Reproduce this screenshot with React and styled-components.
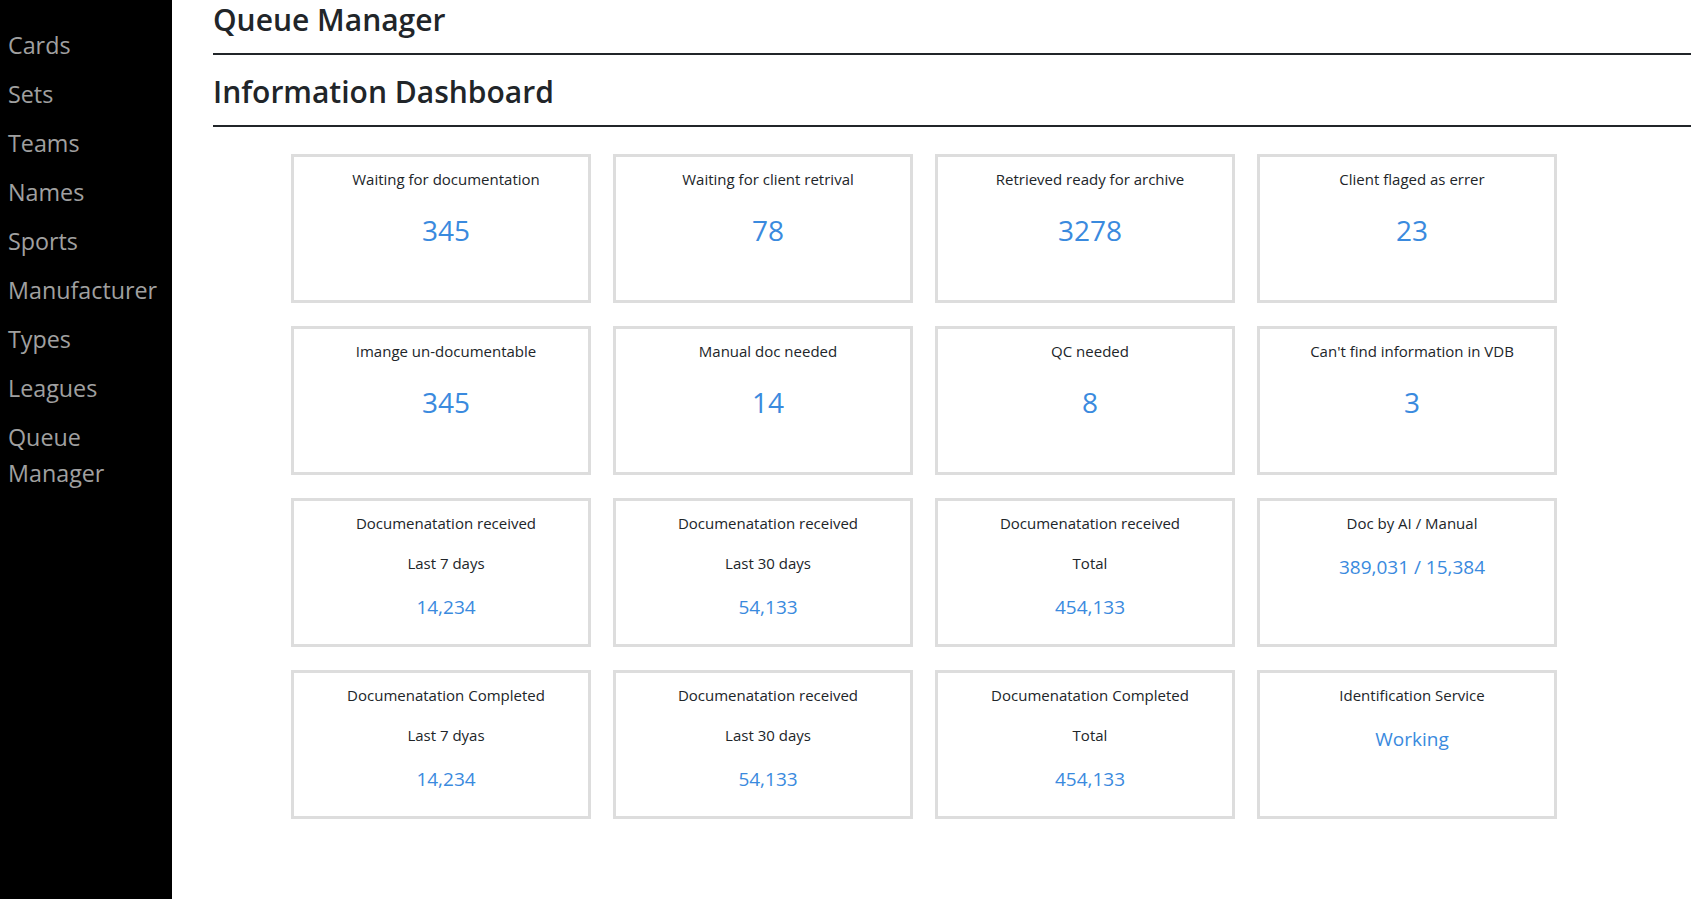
import React from 'react'
import styled, {createGlobalStyle} from 'styled-components'

const GlobalStyle = createGlobalStyle`
html, body{
  margin:0;
  padding:0;
  background:#fff;
}
body{
  font-family:"Open Sans","Noto Sans",sans-serif;
  color:#212529;
}
*{
  box-sizing:border-box;
}
`

const Layout = styled.div`
display:flex;
min-height:100vh;
`
const Sidebar = styled.nav`
flex:0 0 172px;
width:172px;
background:#000;
padding:21px 6px 0 8px;
`
const NavItem = styled.a`
display:block;
padding:6px 0 7px;
font-size:23.3px;
line-height:36px;
color:#a0a0a0;
text-decoration:none;
`
const Main = styled.main`
flex:1;
padding-left:41px;
overflow:hidden;
`
const Heading = styled.h2`
margin:${p => p.first ? '0' : '18px 0 0'};
padding-top:${p => p.first ? '1px' : '0'};
font-size:30px;
font-weight:600;
line-height:38px;
color:#212529;
`
const Rule = styled.hr`
margin:14px 0 0;
border:0;
border-top:2px solid #212529;
opacity:1;
`
const Grid = styled.div`
display:grid;
grid-template-columns:repeat(4,300px);
column-gap:22px;
row-gap:23px;
margin:27px 0 0 78px;
`
const Card = styled.div`
height:149px;
border:3px solid #dddddd;
padding:11px 0 0 10px;
display:flex;
flex-direction:column;
align-items:center;
text-align:center;
`
const Label = styled.div`
font-size:15px;
line-height:22px;
margin-bottom:18px;
color:#212529;
`
const Value = styled.div`
color:#3a8ade;
font-size:${p => p.big ? '28px' : '19px'};
line-height:${p => p.big ? '34px' : '24px'};
margin-top:${p => p.big ? '5px' : '3px'};
`

const navItems = ['Cards','Sets','Teams','Names','Sports','Manufacturer','Types','Leagues','Queue Manager']

const cards = [
  {title:'Waiting for documentation', value:'345', big:true},
  {title:'Waiting for client retrival', value:'78', big:true},
  {title:'Retrieved ready for archive', value:'3278', big:true},
  {title:'Client flaged as errer', value:'23', big:true},
  {title:'Imange un-documentable', value:'345', big:true},
  {title:'Manual doc needed', value:'14', big:true},
  {title:'QC needed', value:'8', big:true},
  {title:"Can't find information in VDB", value:'3', big:true},
  {title:'Documenatation received', sub:'Last 7 days', value:'14,234'},
  {title:'Documenatation received', sub:'Last 30 days', value:'54,133'},
  {title:'Documenatation received', sub:'Total', value:'454,133'},
  {title:'Doc by AI / Manual', value:'389,031 / 15,384'},
  {title:'Documenatation Completed', sub:'Last 7 dyas', value:'14,234'},
  {title:'Documenatation received', sub:'Last 30 days', value:'54,133'},
  {title:'Documenatation Completed', sub:'Total', value:'454,133'},
  {title:'Identification Service', value:'Working'},
]

function App(){
  return(
    <Layout>
      <GlobalStyle/>
      <Sidebar>
        {navItems.map(item => (
          <NavItem key={item} href="#">{item}</NavItem>
        ))}
      </Sidebar>
      <Main>
        <Heading first>Queue Manager</Heading>
        <Rule/>
        <Heading>Information Dashboard</Heading>
        <Rule/>
        <Grid>
          {cards.map((c,i) => (
            <Card key={i}>
              <Label>{c.title}</Label>
              {c.sub && <Label>{c.sub}</Label>}
              <Value big={c.big}>{c.value}</Value>
            </Card>
          ))}
        </Grid>
      </Main>
    </Layout>
  )
}
export default App;
